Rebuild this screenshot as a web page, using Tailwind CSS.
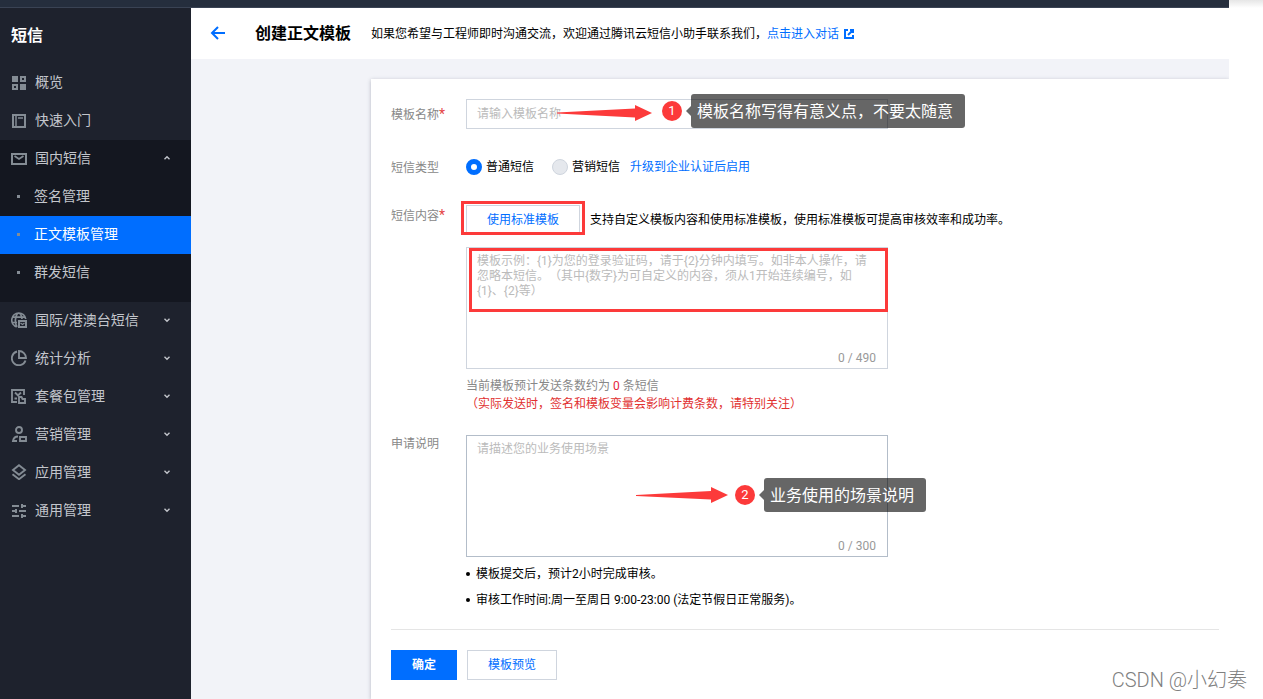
<!DOCTYPE html>
<html lang="zh-CN">
<head>
<meta charset="utf-8">
<title>创建正文模板 - 短信</title>
<script src="https://cdn.jsdelivr.net/npm/@tailwindcss/browser@4"></script>
</head>
<body class="relative flex min-h-screen flex-col bg-white font-[Roboto,'Noto_Sans_CJK_SC',sans-serif] text-xs text-black [text-spacing-trim:space-all]">
<div class="flex h-2">
  <div class="flex-1 border-b border-[#3a4354] bg-[#252e3d]"></div>
  <div class="w-[34px] bg-linear-to-b from-[#e6e6e6] to-white"></div>
</div>
<div class="mr-[34px] flex flex-1">
  <nav class="w-[191px] shrink-0 bg-[#1e222d] text-sm text-[#c3c6cc]" aria-label="短信">
    <h2 class="flex h-14 items-center pl-[11px] text-base font-bold text-white">短信</h2>
    <ul>
      <li><a href="#" class="flex h-[38px] items-center gap-2 pb-0.5 pl-[11px]">
        <svg class="size-4 text-[#848c94]" viewBox="0 0 16 16" fill="none" stroke="currentColor" stroke-width="2"><path fill="currentColor" stroke="none" d="M1 2h6v6H1zM9 10h6v6H9z"/><path d="M10 3h4v4h-4zM2 11h4v4H2z"/></svg>概览</a></li>
      <li><a href="#" class="flex h-[38px] items-center gap-2 pb-0.5 pl-[11px]">
        <svg class="size-4 text-[#848c94]" viewBox="0 0 16 16" fill="none" stroke="currentColor" stroke-width="2"><path d="M2 3h12v12H2z"/><path stroke-width="1.500" d="M5 3v12M7 6h5"/></svg>快速入门</a></li>
      <li class="bg-[#141720] pb-[10px]">
        <a href="#" class="flex h-[38px] items-center gap-2 pr-5 pb-0.5 pl-[11px]">
          <svg class="size-4 text-[#848c94]" viewBox="0 0 16 16" fill="none" stroke="currentColor" stroke-width="2"><path d="M1 4h14v10H1z"/><path stroke-width="1.800" d="M3.500 6L8 9l4.500-3"/></svg>
          <span class="flex-1">国内短信</span>
          <svg class="size-2" viewBox="0 0 8 8" fill="none" stroke="currentColor" stroke-width="1.400"><path d="M1.500 5.200L4 2.800l2.500 2.400"/></svg></a>
        <ul>
          <li><a href="#" class="flex h-[38px] items-center gap-[14px] pb-0.5 pl-[17px]"><span class="size-[3px] bg-[#848c94]"></span>签名管理</a></li>
          <li><a href="#" aria-current="page" class="flex h-[38px] items-center gap-[14px] bg-[#006eff] pb-0.5 pl-[17px] text-white"><span class="size-[3px] bg-[#848c94]"></span>正文模板管理</a></li>
          <li><a href="#" class="flex h-[38px] items-center gap-[14px] pb-0.5 pl-[17px]"><span class="size-[3px] bg-[#848c94]"></span>群发短信</a></li>
        </ul>
      </li>
      <li><a href="#" class="flex h-[38px] items-center gap-2 pr-5 pb-0.5 pl-[11px]">
        <svg class="size-4 text-[#848c94]" viewBox="0 0 16 16" fill="none" stroke="currentColor" stroke-width="1.700"><path d="M6 14.800A7 7 0 1 1 14.700 7M7 1C3.700 4.500 3.700 11 6 15M8.500 1c1.700 1.800 2.500 4 2.500 6M1 5.200h13M1 10.500h5"/><path stroke-width="2" d="M8 9h7v6H8z"/><path stroke-width="1.200" d="M9.500 11l2 1.500 2-1.500"/></svg>
        <span class="flex-1">国际/港澳台短信</span>
        <svg class="size-2" viewBox="0 0 8 8" fill="none" stroke="currentColor" stroke-width="1.400"><path d="M1.500 2.800L4 5.200l2.500-2.400"/></svg></a></li>
      <li><a href="#" class="flex h-[38px] items-center gap-2 pr-5 pb-0.5 pl-[11px]">
        <svg class="size-4 text-[#848c94]" viewBox="0 0 16 16" fill="none" stroke="currentColor" stroke-width="1.900"><path d="M6 1.500A7 7 0 1 0 14.500 10.500M8 1v7h7A7 7 0 0 0 8 1z"/></svg>
        <span class="flex-1">统计分析</span>
        <svg class="size-2" viewBox="0 0 8 8" fill="none" stroke="currentColor" stroke-width="1.400"><path d="M1.500 2.800L4 5.200l2.500-2.400"/></svg></a></li>
      <li><a href="#" class="flex h-[38px] items-center gap-2 pr-5 pb-0.5 pl-[11px]">
        <svg class="size-4 text-[#848c94]" viewBox="0 0 16 16" fill="none" stroke="currentColor" stroke-width="1.900"><path d="M13 7V2H1v12h5M4 4.500l3 3 3-3M3.500 10.500H6"/><path d="M8 15V9h2.500l1 2H14v4z"/></svg>
        <span class="flex-1">套餐包管理</span>
        <svg class="size-2" viewBox="0 0 8 8" fill="none" stroke="currentColor" stroke-width="1.400"><path d="M1.500 2.800L4 5.200l2.500-2.400"/></svg></a></li>
      <li><a href="#" class="flex h-[38px] items-center gap-2 pr-5 pb-0.5 pl-[11px]">
        <svg class="size-4 text-[#848c94]" viewBox="0 0 16 16" fill="none" stroke="currentColor" stroke-width="1.900"><circle cx="8" cy="4" r="3"/><path d="M7 10.500C4 10.500 2.500 12 2 15h4M9 11h6v4H9z"/></svg>
        <span class="flex-1">营销管理</span>
        <svg class="size-2" viewBox="0 0 8 8" fill="none" stroke="currentColor" stroke-width="1.400"><path d="M1.500 2.800L4 5.200l2.500-2.400"/></svg></a></li>
      <li><a href="#" class="flex h-[38px] items-center gap-2 pr-5 pb-0.5 pl-[11px]">
        <svg class="size-4 text-[#848c94]" viewBox="0 0 16 16" fill="none" stroke="currentColor" stroke-width="1.900"><path d="M8 1.300l6 4.700-6 4.700L2 6zM1.500 10.200L8 15.200l6.500-5"/></svg>
        <span class="flex-1">应用管理</span>
        <svg class="size-2" viewBox="0 0 8 8" fill="none" stroke="currentColor" stroke-width="1.400"><path d="M1.500 2.800L4 5.200l2.500-2.400"/></svg></a></li>
      <li><a href="#" class="flex h-[38px] items-center gap-2 pr-5 pb-0.5 pl-[11px]">
        <svg class="size-4 text-[#848c94]" viewBox="0 0 16 16" fill="none" stroke="currentColor" stroke-width="2"><path d="M1 4h7M11 4h4M11 2v4M1 9h4M5 7v4M8 9h7M1 14h7M11 14h4M11 12v4"/></svg>
        <span class="flex-1">通用管理</span>
        <svg class="size-2" viewBox="0 0 8 8" fill="none" stroke="currentColor" stroke-width="1.400"><path d="M1.500 2.800L4 5.200l2.500-2.400"/></svg></a></li>
    </ul>
  </nav>

  <main class="flex min-w-0 flex-1 flex-col overflow-hidden bg-[#f2f3f8]">
    <header class="flex h-[51px] items-center bg-white pl-[19px]">
      <a href="#" aria-label="返回" class="mr-[29px]"><svg class="size-4" viewBox="0 0 16 16" fill="none" stroke="#006eff" stroke-width="2"><path d="M15 7H2.500M8 1L2 7l6 6"/></svg></a>
      <h1 class="mr-5 text-base font-bold">创建正文模板</h1>
      <p>如果您希望与工程师即时沟通交流，欢迎通过腾讯云短信小助手联系我们，<a href="#" class="inline-flex items-center gap-[5px] text-[#006eff]">点击进入对话 <svg class="size-[10px]" viewBox="0 0 10 10" fill="none" stroke="currentColor" stroke-width="2"><path d="M4 1H1v8h8V6M6 1h3v3M9 1L4 6"/></svg></a></p>
    </header>

    <form class="mt-5 ml-[180px] flex-1 bg-white pt-5 pr-[10px] pb-4 pl-5 shadow-[0_1px_4px_rgba(54,58,80,0.32)]">
      <div class="flex">
        <label for="name" class="w-[75px] pt-0.5 leading-7 text-[#888]">模板名称<span class="text-sm leading-none text-[#e54545]">*</span></label>
        <div class="relative w-[422px]">
          <input id="name" type="text" placeholder="请输入模板名称" class="block h-[30px] w-full border border-[#cfd5de] px-[10px] placeholder:text-[#bbb]">
          <div class="absolute -top-[5px] left-[91px] flex h-[34px] items-center whitespace-nowrap">
            <svg class="mt-1 h-[18px] w-24" viewBox="0 0 96 18" fill="#fc3a3a"><path d="M0 8.500L78 4.500V1l17 8-17 8v-3.500L0 9.500z"/></svg>
            <span class="ml-[9px] flex size-5 items-center justify-center rounded-full bg-[#fc3a3a] text-[13px] text-white">1</span>
            <svg class="ml-1 h-[10px] w-[5px]" viewBox="0 0 5 10" fill="#000" fill-opacity=".6"><path d="M0 5l5-5v10z"/></svg>
            <span class="h-[34px] rounded-[3px] bg-black/60 pt-0.5 pr-3 pl-[6px] text-base leading-8 text-white">模板名称写得有意义点，不要太随意</span>
          </div>
        </div>
      </div>

      <div class="mt-[26px] flex h-6" role="radiogroup" aria-labelledby="type-label">
        <span id="type-label" class="w-[75px] pt-0.5 leading-[22px] text-[#888]">短信类型</span>
        <label class="mr-[18px] flex items-center gap-1"><input type="radio" name="type" checked class="size-4 appearance-none rounded-full border-[5px] border-[#006eff] bg-white">普通短信</label>
        <label class="mr-[10px] flex items-center gap-1"><input type="radio" name="type" disabled class="size-4 appearance-none rounded-full border border-[#cfd5de] bg-[#e5e8ed]">营销短信</label>
        <a href="#" class="leading-6 text-[#006eff]">升级到企业认证后启用</a>
      </div>

      <div class="mt-[26px] flex">
        <label for="content" class="w-[75px] pt-0.5 leading-[18px] text-[#888]">短信内容<span class="text-sm leading-none text-[#e54545]">*</span></label>
        <div>
          <div class="flex items-center gap-[10px]">
            <div class="relative">
              <button type="button" class="block h-[30px] w-[114px] border border-[#cfd5de] bg-white text-[#006eff]">使用标准模板</button>
              <span class="absolute -top-1 -right-[5px] bottom-0 -left-[5px] border-[3px] border-[#fc3a3a]"></span>
            </div>
            <p>支持自定义模板内容和使用标准模板，使用标准模板可提高审核效率和成功率。</p>
          </div>
          <div class="relative mt-3 w-[422px]">
            <textarea id="content" placeholder="模板示例：{1}为您的登录验证码，请于{2}分钟内填写。如非本人操作，请忽略本短信。（其中{数字}为可自定义的内容，须从1开始连续编号，如{1}、{2}等）" class="block h-[122px] w-full resize-none border border-[#cfd5de] px-[10px] py-[6px] leading-[15px] placeholder:text-[#bbb]"></textarea>
            <span class="absolute top-px right-0 left-[3px] h-16 border-[3px] border-[#fc3a3a]"></span>
            <span class="absolute right-3 bottom-[3px] leading-4 text-[#999]">0 / 490</span>
          </div>
          <p class="mt-2 leading-[18px] text-[#888]">当前模板预计发送条数约为 <span class="text-[#e5243b]">0</span> 条短信</p>
          <p class="leading-[18px] text-[#e1302f]">（实际发送时，签名和模板变量会影响计费条数，请特别关注）</p>
        </div>
      </div>

      <div class="mt-[22px] flex">
        <label for="remark" class="w-[75px] pt-0.5 leading-[14px] text-[#888]">申请说明</label>
        <div>
          <div class="relative w-[422px]">
            <textarea id="remark" placeholder="请描述您的业务使用场景" class="block h-[122px] w-full resize-none border border-[#b3bdc9] px-[10px] py-[6px] leading-[15px] placeholder:text-[#bbb]"></textarea>
            <span class="absolute right-3 bottom-[3px] leading-4 text-[#999]">0 / 300</span>
            <div class="absolute top-[43px] left-[170px] flex h-[34px] items-center whitespace-nowrap">
              <svg class="h-[18px] w-[93px]" viewBox="0 0 93 18" fill="#fc3a3a"><path d="M0 9L75 5V1l17 8-17 8v-3.500L0 10z"/></svg>
              <span class="ml-[6px] flex size-5 items-center justify-center rounded-full bg-[#fc3a3a] text-[13px] text-white">2</span>
              <svg class="ml-1 h-[10px] w-[5px]" viewBox="0 0 5 10" fill="#000" fill-opacity=".6"><path d="M0 5l5-5v10z"/></svg>
              <span class="h-[34px] rounded-[3px] bg-black/60 pt-0.5 pr-3 pl-[6px] text-base leading-8 text-white">业务使用的场景说明</span>
            </div>
          </div>
          <ul class="mt-1 leading-[26px]">
            <li class="flex items-center gap-[6px]"><span class="size-1 rounded-full bg-black"></span>模板提交后，预计2小时完成审核。</li>
            <li class="flex items-center gap-[6px]"><span class="size-1 rounded-full bg-black"></span>审核工作时间:周一至周日 9:00-23:00 (法定节假日正常服务)。</li>
          </ul>
        </div>
      </div>

      <div class="mt-4 flex gap-[10px] border-t border-[#e5e5e5] pt-5">
        <button type="submit" class="h-[30px] w-[66px] bg-[#006eff] font-bold text-white">确定</button>
        <button type="button" class="h-[30px] w-[90px] border border-[#cfd5de] bg-white text-[#006eff]">模板预览</button>
      </div>
    </form>
  </main>
</div>
<p class="absolute right-4 bottom-[5px] text-xl leading-7 font-light text-[#808080]">CSDN @小幻奏</p>
</body>
</html>
